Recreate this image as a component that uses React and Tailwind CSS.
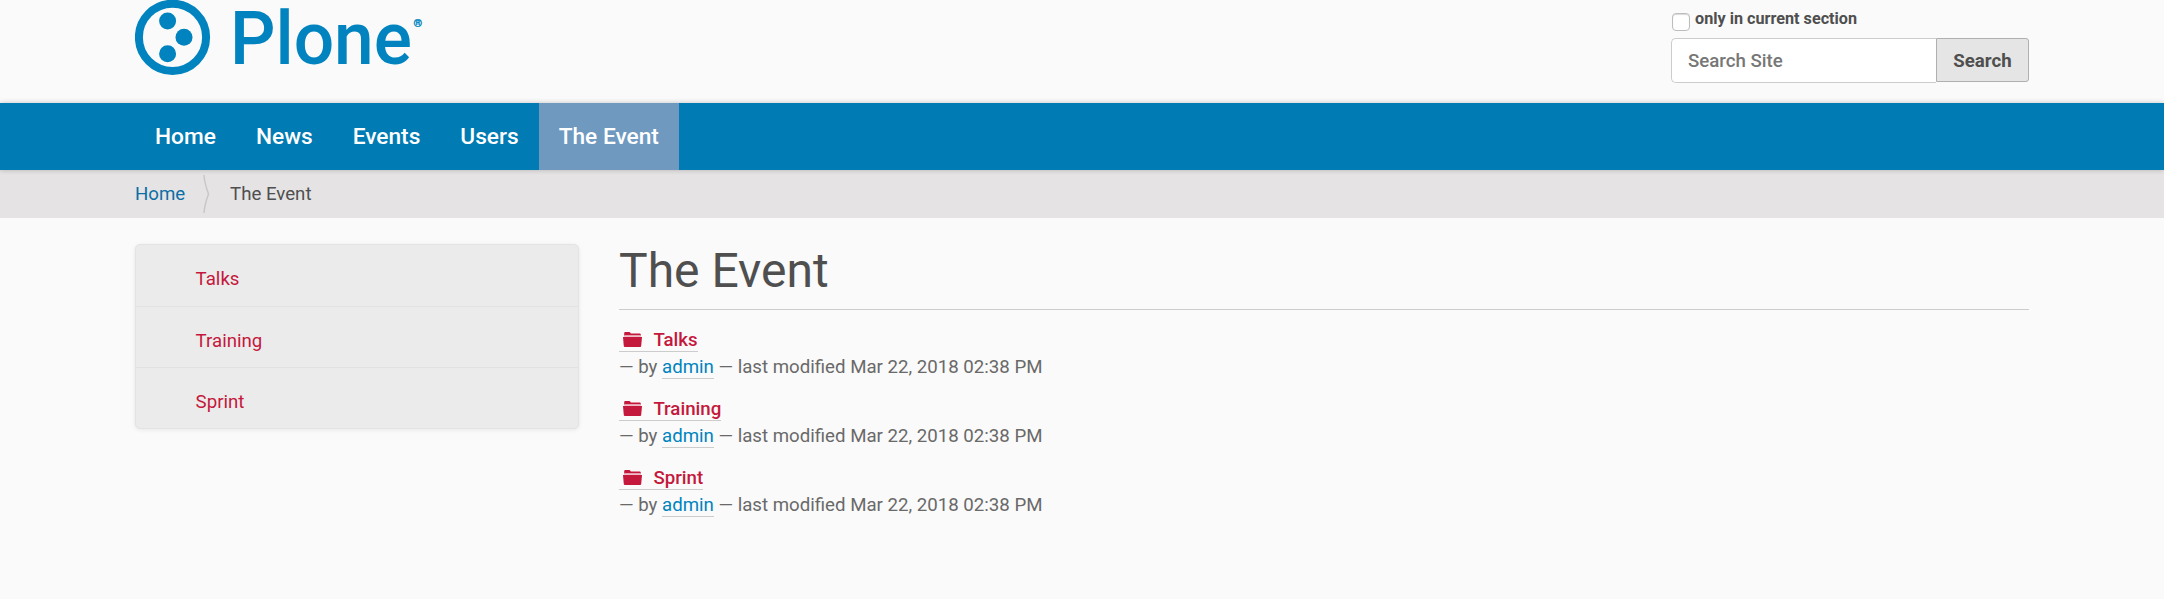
const navItems = ['Home', 'News', 'Events', 'Users', 'The Event'];
const folders = ['Talks', 'Training', 'Sprint'];

function Logo() {
  return (
    <svg className="block h-[76px] w-[300px]" viewBox="0 0 300 76" role="img" aria-label="Plone">
      <circle cx="37.5" cy="37.3" r="33.6" fill="none" stroke="#0083be" strokeWidth="8" />
      <circle cx="32.6" cy="21" r="8.5" fill="#0083be" />
      <circle cx="49" cy="37.3" r="8.5" fill="#0083be" />
      <circle cx="32.6" cy="53.7" r="8.5" fill="#0083be" />
      <text x="95" y="64" textLength="182" lengthAdjust="spacingAndGlyphs" fill="#0083be" className="font-['Roboto',sans-serif] text-[74px] font-medium">Plone</text>
      <text x="278.5" y="26.5" fill="#0083be" stroke="#0083be" strokeWidth="0.4" className="font-['Roboto',sans-serif] text-[11px] font-bold">®</text>
    </svg>
  );
}

function FolderIcon() {
  return (
    <svg className="absolute top-[6px] left-[4px] h-[15px] w-[19px]" viewBox="0 0 19 15" fill="#c4183c">
      <path d="M1.2 4V1Q1.2 0 2.2 0H6.2Q7 0 7.4 .8L7.8 1.6H16.6Q17.8 1.6 17.8 2.8V4Z" />
      <path d="M1.2 3.1H17.8V4.8H1.2Z" fill="#ecb0bd" />
      <path d="M0 4.9H19L18.2 14Q18.1 15 17.1 15H1.9Q.9 15 .8 14Z" />
    </svg>
  );
}

export default function App() {
  return (
    <div className="h-[599px] overflow-hidden bg-[#fafafa] font-['Roboto',sans-serif] text-[18.67px] text-[#696969]">
      <header className="flex h-[103px] items-start justify-between pr-[135px] pl-[135px]">
        <Logo />
        <form className="w-[358px] pt-[9px]">
          <label className="flex h-[29px] items-start text-[16.2px] leading-[20px] font-bold text-[#4f4f4f]">
            <span className="mt-[4px] mr-[5px] ml-px h-[18px] w-[18px] rounded-[4px] border border-[#bdbdbd] bg-white shadow-[inset_0_1px_1px_rgba(0,0,0,0.15)]" />
            only in current section
          </label>
          <div className="flex items-start">
            <input
              className="h-[45px] w-[265px] rounded-l-[5px] border border-r-0 border-[#ccc] bg-white pl-[16px] text-[18.67px] font-medium placeholder:text-[#777]"
              placeholder="Search Site"
            />
            <button type="button" className="h-[44px] w-[93px] rounded-r-[3px] border border-[#b0b0b0] bg-[#e5e5e5] pt-[2px] text-[18.67px] font-bold text-[#4f4f4f]">
              Search
            </button>
          </div>
        </form>
      </header>
      <nav className="relative flex h-[67px] bg-[#007bb3] px-[135px] shadow-[0_0_5px_rgba(0,0,0,0.22)]">
        {navItems.map((item) => (
          <a
            key={item}
            className={
              item === 'The Event'
                ? 'bg-[#6f99bf] px-[20px] text-[22.7px] leading-[67px] font-medium text-white'
                : 'px-[20px] text-[22.7px] leading-[67px] font-medium text-white'
            }
          >
            {item}
          </a>
        ))}
      </nav>
      <div className="flex h-[48px] items-center bg-[#e5e3e4] px-[135px] leading-[48px]">
        <a className="w-[68px] text-[#0b6fa6]">Home</a>
        <svg className="mr-[20px] h-[38px] w-[7px]" viewBox="0 0 7 38" fill="none" stroke="#c9c8c9" strokeWidth="1.5">
          <path d="M1 0Q1.4 8 5.5 19Q1.4 30 1 38" />
        </svg>
        <span className="text-[#4f4f4f]">The Event</span>
      </div>
      <main className="flex items-start px-[135px] pt-[26px]">
        <aside className="w-[444px] rounded-[5px] border border-[#e3e3e3] bg-[#ebebeb] shadow-[0_1px_4px_rgba(0,0,0,0.08)]">
          {folders.map((name) => (
            <a key={name} className="block h-[61px] border-b border-[#e2e2e2] pt-[3px] pl-[59.6px] leading-[62px] text-[#c4183c] first:h-[62px] last:h-[60px] last:border-b-0">
              {name}
            </a>
          ))}
        </aside>
        <section className="ml-[40px] grow">
          <h1 className="h-[66px] border-b border-[#ccc] text-[48px] leading-[54px] text-[#4f4f4f]">The Event</h1>
          <div className="pt-[16px]">
            {folders.map((name) => (
              <article key={name} className="h-[69.2px]">
                <a className="relative flex h-[26px] w-fit border-b border-[#ccc] pl-[34.4px] leading-[29px] font-medium text-[#c4183c]">
                  <FolderIcon />
                  {name}
                </a>
                <div className="flex h-[27px] gap-[4.6px] leading-[31px] whitespace-nowrap">
                  <span>— by</span>
                  <a className="border-b border-[#ccc] text-[#0083be]">admin</a>
                  <span>— last modified Mar 22, 2018 02:38 PM</span>
                </div>
              </article>
            ))}
          </div>
        </section>
      </main>
    </div>
  );
}
